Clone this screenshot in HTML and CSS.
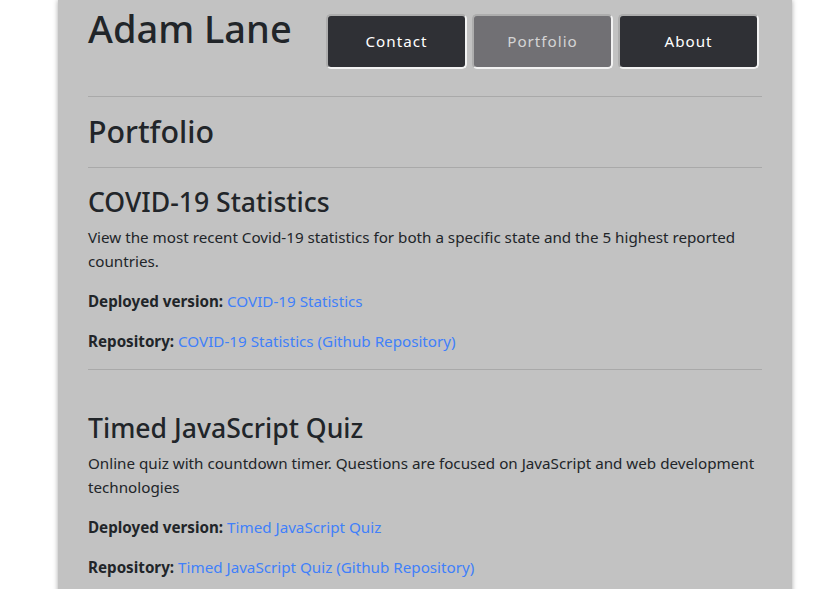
FILE: index.html
```html
<!DOCTYPE html>
<html lang="en">
<head>
<meta charset="utf-8">
<title>Adam Lane - Portfolio</title>
<link rel="stylesheet" href="styles.css">
</head>
<body>
<main class="page">
  <header class="site-header">
    <h1 class="site-title">Adam Lane</h1>
    <nav class="nav">
      <a class="nav-btn" href="#">Contact</a>
      <a class="nav-btn nav-btn-active" href="#">Portfolio</a>
      <a class="nav-btn" href="#">About</a>
    </nav>
  </header>
  <hr class="rule">
  <h2 class="section-title">Portfolio</h2>
  <hr class="rule">
  <section class="project">
    <h3 class="project-title">COVID-19 Statistics</h3>
    <p class="text">View the most recent Covid-19 statistics for both a specific state and the 5 highest reported countries.</p>
    <p class="text"><strong>Deployed version:</strong> <a class="link" href="#">COVID-19 Statistics</a></p>
    <p class="text"><strong>Repository:</strong> <a class="link" href="#">COVID-19 Statistics (Github Repository)</a></p>
  </section>
  <hr class="rule">
  <section class="project project-spaced">
    <h3 class="project-title">Timed JavaScript Quiz</h3>
    <p class="text">Online quiz with countdown timer. Questions are focused on JavaScript and web development technologies</p>
    <p class="text"><strong>Deployed version:</strong> <a class="link" href="#">Timed JavaScript Quiz</a></p>
    <p class="text"><strong>Repository:</strong> <a class="link" href="#">Timed JavaScript Quiz (Github Repository)</a></p>
  </section>
</main>
</body>
</html>
```
FILE: styles.css
```css
html, body {
  margin: 0;
  padding: 0;
  background: #ffffff;
}
body {
  font-family: "Noto Sans", "Open Sans", sans-serif;
  font-size: 15.2px;
  line-height: 24px;
  color: #212529;
  overflow: hidden;
}
.page {
  margin-left: 58px;
  width: 734px;
  min-height: 700px;
  box-sizing: border-box;
  padding: 0 30px;
  background: #c2c2c2;
  box-shadow: 0 0 5px rgba(0, 0, 0, 0.35);
}
.site-header {
  display: flex;
  justify-content: space-between;
  align-items: flex-start;
  padding-top: 4px;
}
.site-title {
  margin: 0 0 8px;
  font-size: 38px;
  line-height: 48px;
  font-weight: 500;
}
.nav {
  display: flex;
  gap: 5px;
  margin: 10px 3px 11px 0;
}
.nav-btn {
  display: flex;
  align-items: center;
  justify-content: center;
  width: 141px;
  height: 55px;
  box-sizing: border-box;
  padding-bottom: 2px;
  border: 2px solid;
  border-color: #adadad #f2f2f2 #f2f2f2 #adadad;
  border-radius: 5px;
  background: #2f3035;
  color: #ffffff;
  text-decoration: none;
  letter-spacing: 1px;
  font-size: 15.2px;
}
.nav-btn-active {
  background: #717074;
  color: #d4d4d4;
}
.rule {
  margin: 16px 0;
  border: 0;
  border-top: 1px solid #a9a9a9;
}
.section-title {
  margin: 0;
  font-size: 30.4px;
  line-height: 38px;
  font-weight: 500;
}
.project-title {
  margin: 0 0 7px;
  padding-top: 2px;
  font-size: 26.6px;
  line-height: 32px;
  font-weight: 500;
}
.project-spaced {
  padding-top: 24px;
}
.text {
  margin: 0 0 16px;
}
.text strong {
  font-weight: 700;
}
.link {
  color: #4080fa;
  text-decoration: none;
}
```
